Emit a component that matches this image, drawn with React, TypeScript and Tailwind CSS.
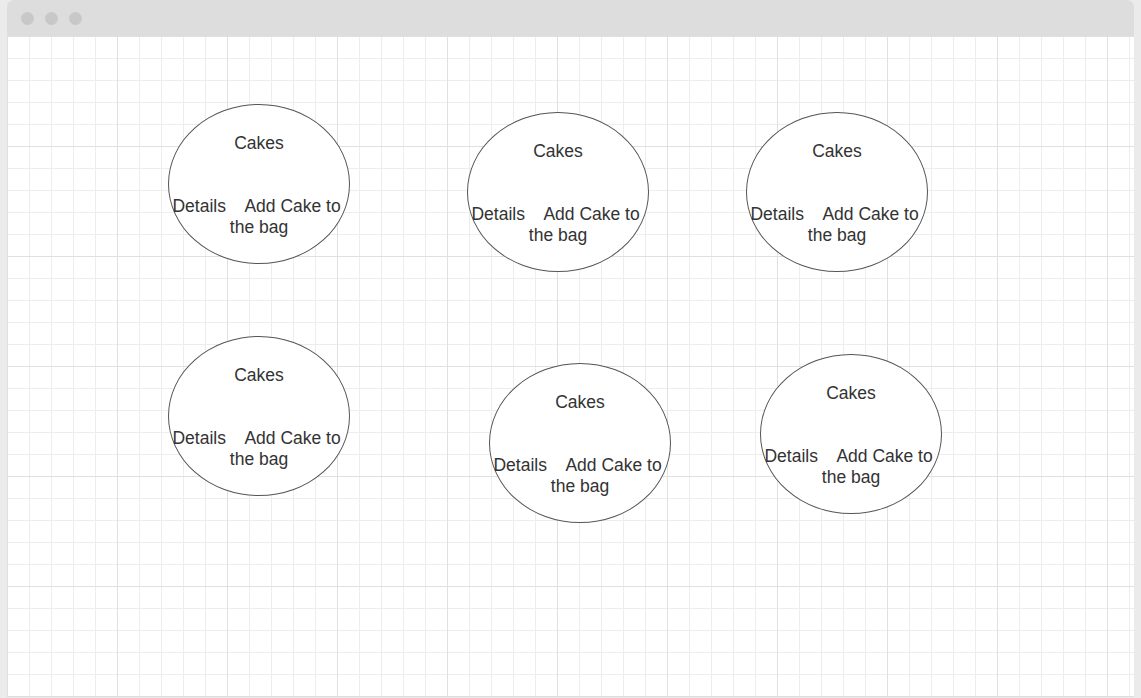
import React from "react";

const nodes = [
  { x: 161, y: 68 },
  { x: 460, y: 76 },
  { x: 739, y: 76 },
  { x: 161, y: 300 },
  { x: 482, y: 327 },
  { x: 753, y: 318 },
];

function Grid() {
  return (
    <svg className="absolute inset-0 h-full w-full" xmlns="http://www.w3.org/2000/svg">
      <defs>
        <pattern id="minor" width="22" height="22" patternUnits="userSpaceOnUse">
          <path d="M0 0.5 H22 M0.5 0 V22" stroke="#ededed" strokeWidth="1" fill="none" />
        </pattern>
        <pattern id="major" width="110" height="110" patternUnits="userSpaceOnUse">
          <rect width="110" height="110" fill="url(#minor)" />
          <path d="M0 0.5 H110 M0.5 0 V110" stroke="#e0e0e0" strokeWidth="1" fill="none" />
        </pattern>
      </defs>
      <rect width="100%" height="100%" fill="#ffffff" />
      <rect width="100%" height="100%" fill="url(#major)" />
    </svg>
  );
}

function Node({ x, y }: { x: number; y: number }) {
  return (
    <div
      className="absolute flex h-[160px] w-[182px] flex-col items-center rounded-[50%] border border-[#555555] bg-white pt-[28px] text-[17.5px] leading-[21px] text-[#333333]"
      style={{ left: x, top: y, fontFamily: '"Liberation Sans", Arial, sans-serif' }}
    >
      <div>Cakes</div>
      <div className="mt-[42px] whitespace-pre text-center">{"Details    Add Cake to "}</div>
      <div>the bag</div>
    </div>
  );
}

export default function App() {
  return (
    <div className="h-[698px] w-[1141px] overflow-hidden bg-[#ebebeb]">
      <div className="ml-[7px] flex h-[697px] w-[1127px] flex-col">
        <div className="flex h-[36px] items-center gap-[11px] rounded-t-[7px] bg-[#dddddd] pl-[14px]">
          <div className="h-[13px] w-[13px] rounded-full bg-[#c8c8c8]" />
          <div className="h-[13px] w-[13px] rounded-full bg-[#c8c8c8]" />
          <div className="h-[13px] w-[13px] rounded-full bg-[#c8c8c8]" />
        </div>
        <div className="relative flex-1 overflow-hidden border-b border-[#dddddd]">
          <Grid />
          {nodes.map((n, i) => (
            <Node key={i} x={n.x} y={n.y} />
          ))}
        </div>
      </div>
    </div>
  );
}
